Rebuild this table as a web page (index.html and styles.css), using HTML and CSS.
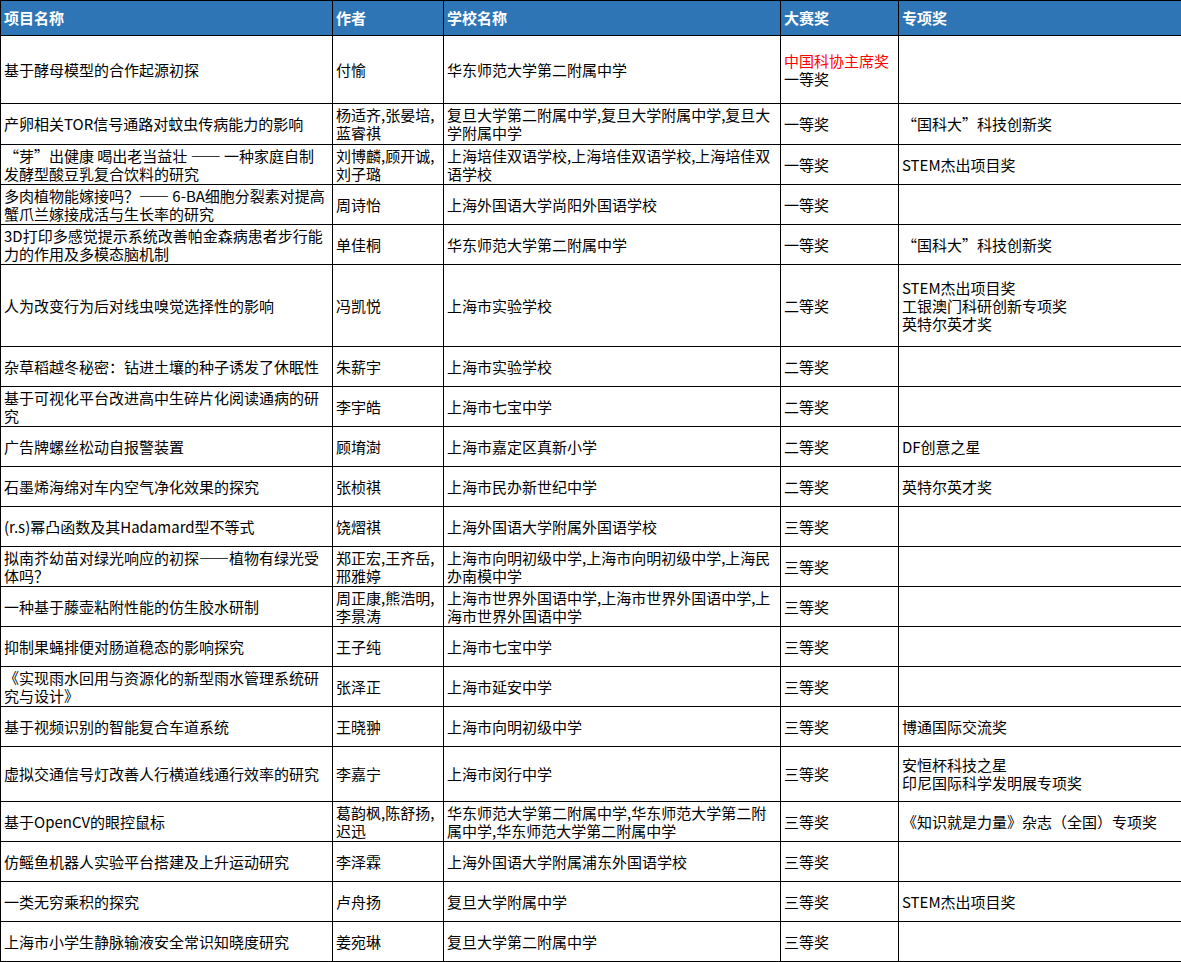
FILE: index.html
```html
<!DOCTYPE html>
<html lang="zh-CN">
<head>
<meta charset="utf-8">
<title>获奖项目</title>
<link rel="stylesheet" href="styles.css">
</head>
<body>
<table class="sheet">
  <colgroup>
    <col class="c1"><col class="c2"><col class="c3"><col class="c4"><col class="c5">
  </colgroup>
  <thead>
    <tr class="h35">
      <th>项目名称</th><th>作者</th><th>学校名称</th><th>大赛奖</th><th>专项奖</th>
    </tr>
  </thead>
  <tbody>
    <tr class="h68">
      <td>基于酵母模型的合作起源初探</td><td>付愉</td><td>华东师范大学第二附属中学</td>
      <td><span class="red">中国科协主席奖</span><br>一等奖</td><td></td>
    </tr>
    <tr class="h41">
      <td>产卵相关TOR信号通路对蚊虫传病能力的影响</td><td>杨适齐,张晏培,<br>蓝睿祺</td><td>复旦大学第二附属中学,复旦大学附属中学,复旦大<br>学附属中学</td>
      <td>一等奖</td><td>“国科大”科技创新奖</td>
    </tr>
    <tr class="h40">
      <td>“芽”出健康 喝出老当益壮 —— 一种家庭自制<br>发酵型酸豆乳复合饮料的研究</td><td>刘博麟,顾开诚,<br>刘子璐</td><td>上海培佳双语学校,上海培佳双语学校,上海培佳双<br>语学校</td>
      <td>一等奖</td><td>STEM杰出项目奖</td>
    </tr>
    <tr class="h40">
      <td>多肉植物能嫁接吗？—— 6-BA细胞分裂素对提高<br>蟹爪兰嫁接成活与生长率的研究</td><td>周诗怡</td><td>上海外国语大学尚阳外国语学校</td>
      <td>一等奖</td><td></td>
    </tr>
    <tr class="h40">
      <td>3D打印多感觉提示系统改善帕金森病患者步行能<br>力的作用及多模态脑机制</td><td>单佳桐</td><td>华东师范大学第二附属中学</td>
      <td>一等奖</td><td>“国科大”科技创新奖</td>
    </tr>
    <tr class="h82">
      <td>人为改变行为后对线虫嗅觉选择性的影响</td><td>冯凯悦</td><td>上海市实验学校</td>
      <td>二等奖</td><td>STEM杰出项目奖<br>工银澳门科研创新专项奖<br>英特尔英才奖</td>
    </tr>
    <tr class="h40">
      <td>杂草稻越冬秘密：钻进土壤的种子诱发了休眠性</td><td>朱薪宇</td><td>上海市实验学校</td>
      <td>二等奖</td><td></td>
    </tr>
    <tr class="h40">
      <td>基于可视化平台改进高中生碎片化阅读通病的研<br>究</td><td>李宇皓</td><td>上海市七宝中学</td>
      <td>二等奖</td><td></td>
    </tr>
    <tr class="h40">
      <td>广告牌螺丝松动自报警装置</td><td>顾堉澍</td><td>上海市嘉定区真新小学</td>
      <td>二等奖</td><td>DF创意之星</td>
    </tr>
    <tr class="h40">
      <td>石墨烯海绵对车内空气净化效果的探究</td><td>张桢祺</td><td>上海市民办新世纪中学</td>
      <td>二等奖</td><td>英特尔英才奖</td>
    </tr>
    <tr class="h40">
      <td>(r.s)幂凸函数及其Hadamard型不等式</td><td>饶熠祺</td><td>上海外国语大学附属外国语学校</td>
      <td>三等奖</td><td></td>
    </tr>
    <tr class="h40">
      <td>拟南芥幼苗对绿光响应的初探——植物有绿光受<br>体吗？</td><td>郑正宏,王齐岳,<br>邢雅婷</td><td>上海市向明初级中学,上海市向明初级中学,上海民<br>办南模中学</td>
      <td>三等奖</td><td></td>
    </tr>
    <tr class="h40">
      <td>一种基于藤壶粘附性能的仿生胶水研制</td><td>周正康,熊浩明,<br>李景涛</td><td>上海市世界外国语中学,上海市世界外国语中学,上<br>海市世界外国语中学</td>
      <td>三等奖</td><td></td>
    </tr>
    <tr class="h40">
      <td>抑制果蝇排便对肠道稳态的影响探究</td><td>王子纯</td><td>上海市七宝中学</td>
      <td>三等奖</td><td></td>
    </tr>
    <tr class="h40">
      <td>《实现雨水回用与资源化的新型雨水管理系统研<br>究与设计》</td><td>张泽正</td><td>上海市延安中学</td>
      <td>三等奖</td><td></td>
    </tr>
    <tr class="h40">
      <td>基于视频识别的智能复合车道系统</td><td>王晓翀</td><td>上海市向明初级中学</td>
      <td>三等奖</td><td>博通国际交流奖</td>
    </tr>
    <tr class="h55">
      <td>虚拟交通信号灯改善人行横道线通行效率的研究</td><td>李嘉宁</td><td>上海市闵行中学</td>
      <td>三等奖</td><td>安恒杯科技之星<br>印尼国际科学发明展专项奖</td>
    </tr>
    <tr class="h40">
      <td>基于OpenCV的眼控鼠标</td><td>葛韵枫,陈舒扬,<br>迟迅</td><td>华东师范大学第二附属中学,华东师范大学第二附<br>属中学,华东师范大学第二附属中学</td>
      <td>三等奖</td><td>《知识就是力量》杂志（全国）专项奖</td>
    </tr>
    <tr class="h40">
      <td>仿鳐鱼机器人实验平台搭建及上升运动研究</td><td>李泽霖</td><td>上海外国语大学附属浦东外国语学校</td>
      <td>三等奖</td><td></td>
    </tr>
    <tr class="h40">
      <td>一类无穷乘积的探究</td><td>卢舟扬</td><td>复旦大学附属中学</td>
      <td>三等奖</td><td>STEM杰出项目奖</td>
    </tr>
    <tr class="h40">
      <td>上海市小学生静脉输液安全常识知晓度研究</td><td>姜宛琳</td><td>复旦大学第二附属中学</td>
      <td>三等奖</td><td></td>
    </tr>
  </tbody>
</table>
</body>
</html>
```

FILE: styles.css
```css
html, body {
  margin: 0;
  padding: 0;
  background: #ffffff;
}

.sheet {
  border-collapse: collapse;
  table-layout: fixed;
  width: 1181px;
  font-family: "Noto Sans CJK SC", "Noto Sans", sans-serif;
  font-size: 15px;
  line-height: 18px;
  color: #000000;
}

.c1 { width: 332px; }
.c2 { width: 111px; }
.c3 { width: 337px; }
.c4 { width: 118px; }
.c5 { width: 283px; }

.sheet th,
.sheet td {
  border: 1px solid #000000;
  padding: 0 2px 0 3px;
  text-align: left;
  vertical-align: middle;
  white-space: nowrap;
  overflow: hidden;
}

.sheet th {
  background: #2e75b6;
  color: #ffffff;
  font-weight: bold;
}

.h35 { height: 35px; }
.h40 { height: 40px; }
.h41 { height: 41px; }
.h55 { height: 55px; }
.h68 { height: 68px; }
.h82 { height: 82px; }

.red { color: #ff0000; }
```
